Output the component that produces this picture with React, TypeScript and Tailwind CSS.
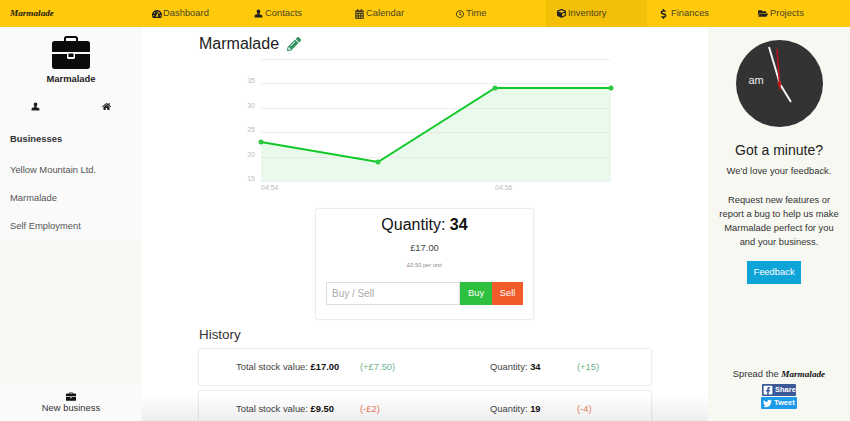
import React from "react";
import { FaCalendarAlt, FaRegClock, FaHome, FaPencilAlt, FaFolderOpen, FaDollarSign, FaTachometerAlt, FaCube, FaFacebookSquare, FaTwitter } from "react-icons/fa";

const sans = "font-['Liberation_Sans',Arial,sans-serif]";
const script = "font-['Liberation_Serif',serif] italic font-bold";

function UserIcon({ className }: { className?: string }) {
  return (
    <svg viewBox="0 0 16 16" className={className} fill="currentColor">
      <path d="M8 1c2 0 3.2 1.4 3.2 3.5 0 1.4-.6 2.8-1.5 3.5v1.2l4 1.6c.9.4 1.3 1 1.3 2V15H1v-2.7c0-1 .4-1.6 1.3-2l4-1.6V8c-.9-.7-1.5-2.1-1.5-3.5C4.800 2.400 6 1 8 1z" />
    </svg>
  );
}

function Briefcase({ className }: { className?: string }) {
  return (
    <svg viewBox="0 0 38 33" className={className} fill="currentColor">
      <path fillRule="evenodd" d="M12 5V2.500C12 1 13 0 14.500 0h9C25 0 26 1 26 2.500V5h9.500C37 5 38 6 38 7.500V16H0V7.500C0 6 1 5 2.500 5zM14 5h10V2.500c0-.3-.2-.5-.5-.5h-9c-.3 0-.5.2-.5.500z" />
      <path d="M0 18h15v3.500c0 .8.700 1.500 1.500 1.500h5c.8 0 1.500-.7 1.500-1.500V18h15v12.500c0 1.500-1 2.500-2.500 2.500h-33C1 33 0 32 0 30.500z" />
      <rect x="16.500" y="17.500" width="5" height="3.500" rx=".5" />
    </svg>
  );
}

const navItems = [
  { label: "Dashboard", icon: <FaTachometerAlt className="w-[10px] h-[10px]" />, pad: "pl-[10px]", gap: "gap-[1px]" },
  { label: "Contacts", icon: <UserIcon className="w-[9px] h-[9px]" />, pad: "pl-[11px]", gap: "gap-[2px]" },
  { label: "Calendar", icon: <FaCalendarAlt className="w-[9px] h-[10px] opacity-80" />, pad: "pl-[11px]", gap: "gap-[2px]" },
  { label: "Time", icon: <FaRegClock className="w-[8px] h-[8px]" />, pad: "pl-[11px]", gap: "gap-[2px]" },
  { label: "Inventory", icon: <FaCube className="w-[9px] h-[9px]" />, pad: "pl-[11px]", gap: "gap-[2px]", active: true },
  { label: "Finances", icon: <FaDollarSign className="w-[7px] h-[10px]" />, pad: "pl-[13px]", gap: "gap-[4px]" },
  { label: "Projects", icon: <FaFolderOpen className="w-[10px] h-[9px]" />, pad: "pl-[10px]", gap: "gap-[2px]" },
];

function Chart() {
  const gridY = [59, 83, 108, 132, 157, 181];
  const labels: [string, number][] = [["35", 80], ["30", 105], ["25", 129], ["20", 154], ["15", 178]];
  const pts: [number, number][] = [[261, 142], [378, 162], [495, 88], [611, 88]];
  const ox = 199;
  const oy = 55;
  const line = pts.map(([x, y]) => `${x - ox},${y - oy}`).join(" ");
  return (
    <svg width="452" height="140" className="block shrink-0">
      <polygon points={`${261 - ox},${181 - oy} ${line} ${611 - ox},${181 - oy}`} fill="#e9f9ec" />
      {gridY.map((y) => (
        <line key={y} x1={261 - ox} x2={611 - ox} y1={y - oy + 0.5} y2={y - oy + 0.5} stroke="#dcdcdc" strokeWidth="1" strokeDasharray="1 1" />
      ))}
      {labels.map(([t, y]) => (
        <text key={t} x={255 - ox} y={y - oy + 2.500} textAnchor="end" fontSize="7" fill="#bdbdbd" fontFamily="Liberation Sans">{t}</text>
      ))}
      <text x={261 - ox} y={190 - oy} fontSize="7" fill="#bdbdbd" fontFamily="Liberation Sans">04:54</text>
      <text x={495 - ox} y={190 - oy} fontSize="7" fill="#bdbdbd" fontFamily="Liberation Sans">04:56</text>
      <polyline points={line} fill="none" stroke="#10c928" strokeWidth="2" />
      {pts.map(([x, y]) => (
        <circle key={x} cx={x - ox} cy={y - oy} r="2.500" fill="#2ec943" />
      ))}
    </svg>
  );
}

function HistoryRow({ value, dv, qty, dq, up }: { value: string; dv: string; qty: string; dq: string; up: boolean }) {
  const tone = up ? "text-[#6fb28c]" : "text-[#ef7a5c]";
  return (
    <div className="h-[36px] rounded-[2px] bg-white shadow-[0_0_2px_rgba(0,0,0,0.28)] flex items-center text-[9.400px] text-[#444] shrink-0">
      <div className="w-[161px] pl-[37px] whitespace-nowrap">Total stock value: <b className="text-[#111]">{value}</b></div>
      <div className={`w-[130px] ${tone}`}>{dv}</div>
      <div className="w-[87px] whitespace-nowrap">Quantity: <b className="text-[#111]">{qty}</b></div>
      <div className={tone}>{dq}</div>
    </div>
  );
}

export default function App() {
  return (
    <div className={`${sans} relative h-[421px] w-[850px] overflow-hidden bg-white text-[9.400px] text-[#333] flex flex-col`}>
      <header className="h-[27px] shrink-0 bg-[#ffc90c] flex text-[#4a4520]">
        <div className="w-[142px] flex items-center pl-[10px]">
          <span className={`${script} text-[9.200px] text-[#1c1a10]`}>Marmalade</span>
        </div>
        {navItems.map((n) => (
          <div key={n.label} className={`w-[101px] flex items-center ${n.pad} ${n.gap} ${n.active ? "bg-[#f3bf08]" : ""}`}>
            <span className="text-[#222] flex items-center">{n.icon}</span>
            <span>{n.label}</span>
          </div>
        ))}
      </header>

      <div className="flex-1 flex min-h-0">
        <aside className="w-[142px] shrink-0 flex flex-col bg-[#f7f8f2]">
          <div className="h-[213px] bg-[#fafafa] flex flex-col shrink-0">
            <div className="flex flex-col items-center pt-[9px]">
              <Briefcase className="w-[38px] h-[33px] text-[#0b0b0b]" />
              <div className="font-bold text-[#222] mt-[4px] leading-[12px]">Marmalade</div>
            </div>
            <div className="flex mt-[17px] pl-[31px] gap-[62px] text-[#222]">
              <UserIcon className="w-[9px] h-[9px]" />
              <FaHome className="w-[9px] h-[9px]" />
            </div>
            <div className="font-bold text-[#333] pl-[10px] mt-[22px] leading-[12px]">Businesses</div>
            <div className="pl-[10px] mt-[19px] leading-[12px] flex flex-col gap-[16px] text-[#555]">
              <div>Yellow Mountain Ltd.</div>
              <div>Marmalade</div>
              <div>Self Employment</div>
            </div>
          </div>
          <div className="flex-1" />
          <div className="h-[38px] bg-[#fafafa] flex flex-col items-center justify-end pb-[8px] shrink-0">
            <Briefcase className="w-[10px] h-[9px] text-[#111] mb-[1px]" />
            <div className="leading-[11px] text-[#333]">New business</div>
          </div>
        </aside>

        <main className="w-[566px] shrink-0 px-[57px] flex flex-col overflow-hidden">
          <div className="flex items-center h-[28px] pt-[6px] shrink-0">
            <span className="text-[16px] text-[#222]">Marmalade</span>
            <FaPencilAlt className="w-[14px] h-[14px] ml-[8px] text-[#2f8f5e]" />
          </div>
          <Chart />
          <div className="w-[217px] h-[110px] ml-[117px] mt-[14px] rounded-[2px] bg-white shadow-[0_0_2px_rgba(0,0,0,0.3)] flex flex-col items-center shrink-0">
            <div className="text-[16px] text-[#111] leading-[18px] mt-[7px]">Quantity: <b>34</b></div>
            <div className="text-[#444] leading-[12px] mt-[8px]">£17.00</div>
            <div className="text-[5.700px] text-[#888] leading-[8px] mt-[7px]">£0.50 per unit</div>
            <div className="flex w-[197px] h-[23px] mt-[13px]">
              <div className="flex-1 border border-[#ddd] flex items-center pl-[5px] text-[10px] text-[#aaa]">Buy / Sell</div>
              <div className="w-[32px] bg-[#2dbf3e] text-white flex items-center justify-center">Buy</div>
              <div className="w-[31px] bg-[#f15a29] text-white flex items-center justify-center">Sell</div>
            </div>
          </div>
          <div className="text-[13.400px] text-[#333] leading-[16px] mt-[8px] shrink-0">History</div>
          <div className="mt-[6px] flex flex-col gap-[6px]">
            <HistoryRow value="£17.00" dv="(+£7.50)" qty="34" dq="(+15)" up />
            <HistoryRow value="£9.50" dv="(-£2)" qty="19" dq="(-4)" up={false} />
          </div>
        </main>

        <aside className="w-[142px] shrink-0 bg-[#f7f8f2] flex flex-col items-center text-center text-[#333]">
          <div className="relative w-[87px] h-[87px] mt-[13px] rounded-full bg-[#333] shrink-0">
            <span className="absolute left-[13px] top-[33px] text-[11px] leading-[14px] text-[#eee]">am</span>
            <svg viewBox="0 0 87 87" className="absolute inset-0">
              <polyline points="33,7 44,44 55,62" fill="none" stroke="#f2f2f2" strokeWidth="2" />
              <line x1="41" y1="9" x2="44" y2="50" stroke="#c8101a" strokeWidth="1.500" />
              <circle cx="43.500" cy="44" r="2" fill="#c8101a" />
            </svg>
          </div>
          <div className="text-[14px] leading-[16px] mt-[15px] text-[#222]">Got a minute?</div>
          <div className="leading-[12px] mt-[7px]">We'd love your feedback.</div>
          <div className="leading-[14px] mt-[16px]">
            Request new features or<br />report a bug to help us make<br />Marmalade perfect for you<br />and your business.
          </div>
          <div className="w-[54px] h-[23px] mt-[12px] mr-[10px] bg-[#0fa4d8] text-white flex items-center justify-center shrink-0">Feedback</div>
          <div className="mt-[84px] leading-[12px] whitespace-nowrap">
            Spread the <span className={`${script} text-[#111] text-[9.200px]`}>Marmalade</span>
          </div>
          <div className="mt-[4px] w-[34px] h-[12px] bg-[#3b5998] text-white flex items-center text-[7.500px] font-bold rounded-[1px] shrink-0">
            <FaFacebookSquare className="w-[10px] h-[10px] mx-[1px]" />
            <span className="ml-[1px]">Share</span>
          </div>
          <div className="mt-[1px] w-[36px] h-[12px] bg-[#1d9bea] text-white flex items-center text-[7.500px] font-bold rounded-[1px] shrink-0">
            <FaTwitter className="w-[9px] h-[9px] mx-[2px]" />
            <span>Tweet</span>
          </div>
        </aside>
      </div>

      <div className="absolute left-[142px] bottom-0 w-[566px] h-[26px] bg-gradient-to-b from-transparent to-[#00000012] pointer-events-none" />
    </div>
  );
}
